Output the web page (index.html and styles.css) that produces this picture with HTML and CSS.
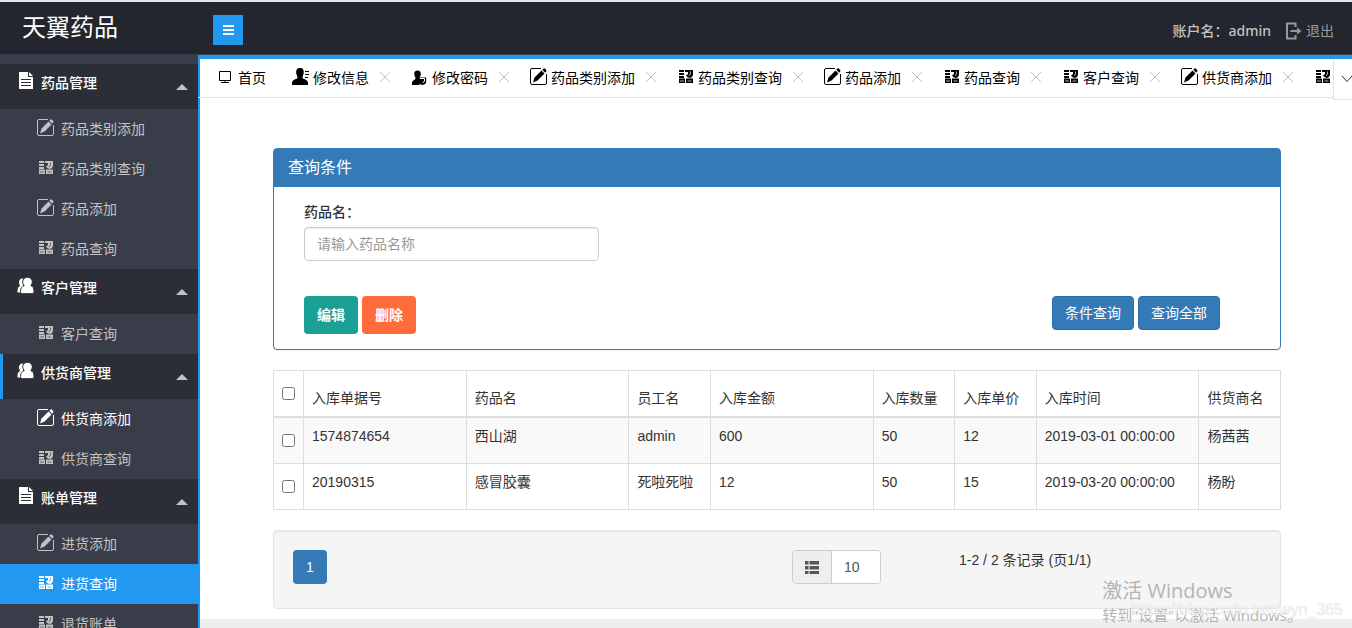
FILE: index.html
```html
<!DOCTYPE html>
<html lang="zh-CN">
<head>
<meta charset="utf-8">
<title>天翼药品</title>
<link rel="stylesheet" href="styles.css">
</head>
<body>
<svg class="sprite" aria-hidden="true">
  <symbol id="doc" viewBox="0 0 17 17"><path d="M2 0h9v5h5v12H2z"/><path d="M12 0l4 4h-4z"/><path class="cut" d="M4 7.500h10M4 10.500h10M4 13.500h10"/></symbol>
  <symbol id="users" viewBox="0 0 17 17"><path d="M5.500 1.500C3 1.500 1.800 3.500 2 6c.2 1.500 1 2.200 1 3C1 10 .5 11.500.5 15.500H6v-14z"/><path class="edge" d="M10.500.3c3 0 4.800 2 4.800 4.500 0 1.600-.8 2.800-1.500 3.800C16 9.500 17 11 17 14.500c0 1.400-.7 2.200-2 2.200H5.500c-1.300 0-2-.8-2-2.200 0-3.500 1.200-5 3.700-5.900-.7-1-1.500-2.200-1.500-3.800C5.700 2.300 7.500.3 10.500.3z"/></symbol>
  <symbol id="edit" viewBox="0 0 17 17"><path class="line" d="M11 .5H2Q.5.5.5 2v13q0 1.500 1.500 1.500h13q1.500 0 1.500-1.500V6"/><path d="M3 14.500l1.500-5L11.500 2.500l3 3-7 7zM12.300 1.800l1.200-1.200q.7-.6 1.300 0l1.400 1.400q.6.600 0 1.300L15.200 4.700z"/></symbol>
  <symbol id="list" viewBox="0 0 17 17"><path d="M2 2h5v2H2zM2 5h5v2H2zM2 8h5v2H2zM2 10.500h6V15H2zM9 10.500h7V15H9z"/><path d="M8 2h8v4q0 3-3 4-3-.5-4-2.500L11 6V4H8z"/><path class="cut thin" d="M3 13h4M10.500 13h4M13.500 3.500V6L12 8"/></symbol>
  <symbol id="monitor" viewBox="0 0 14 14"><path class="line" d="M1.500 1.500h11v9h-11zM7 10.500v2M3 12.500h8"/></symbol>
  <symbol id="person" viewBox="0 0 17 17"><path d="M8 0c3 0 4 2 3.700 5-.2 2-1.200 3-1.200 5 0 1 5.500 1.200 5.500 5v2H0v-2c0-3.800 5.500-4 5.500-5 0-2-1.200-3-1.300-5C4 2 5 0 8 0z"/><path class="line" d="M13 3.500h4M13 6.500h4M13 9.500h3"/></symbol>
  <symbol id="secure" viewBox="0 0 17 17"><path d="M6.500 2.500c2.300 0 3.500 1.500 3.300 3.700-.1 1.700-1.300 2.500-1.300 3.800v7H1v-2c0-3 3.500-3 3.500-4.500 0-1.500-1-2.600-1.200-4.300C3 4 4.200 2.500 6.500 2.500z"/><path d="M7.500 9.500h7.700v4q0 2.500-3.500 3.500-4.200-1-4.200-3.500z"/><path class="cut" d="M9 10.500h4.500v2.500q-.5 1.500-2 1.500"/></symbol>
  <symbol id="exit" viewBox="0 0 17 18"><path class="thick" d="M10.500 5V1.500H2v15h8.500V13M5.500 9h9"/><path d="M12 5.500L16.500 9 12 12.500z"/></symbol>
  <symbol id="close" viewBox="0 0 12 12"><path class="line" d="M1 1l10 10M11 1L1 11"/></symbol>
  <symbol id="chevron" viewBox="0 0 12 8"><path class="line" d="M1 1l5 5.500L11 1"/></symbol>
  <symbol id="rows" viewBox="0 0 14 13"><path d="M0 0h3.500v3.500H0zM4.500 0H14v3.500H4.500zM0 5h3.500v3.500H0zM4.500 5H14v3.500H4.500zM0 10h3.500v3H0zM4.500 10H14v3H4.500z"/></symbol>
</svg>

<header class="top">
  <h1 class="logo">天翼药品</h1>
  <button class="toggle" aria-label="切换菜单"><span class="bars"></span></button>
  <div class="account"><span class="user">账户名：admin</span><a class="logout" href="#"><svg class="ico-exit"><use href="#exit"/></svg>退出</a></div>
</header>

<div class="layout">
  <nav class="side">
    <section>
      <button class="group"><svg class="ico"><use href="#doc"/></svg><span>药品管理</span><i class="caret"></i></button>
      <a class="item" href="#"><svg class="ico"><use href="#edit"/></svg>药品类别添加</a>
      <a class="item" href="#"><svg class="ico"><use href="#list"/></svg>药品类别查询</a>
      <a class="item" href="#"><svg class="ico"><use href="#edit"/></svg>药品添加</a>
      <a class="item" href="#"><svg class="ico"><use href="#list"/></svg>药品查询</a>
    </section>
    <section>
      <button class="group"><svg class="ico"><use href="#users"/></svg><span>客户管理</span><i class="caret"></i></button>
      <a class="item" href="#"><svg class="ico"><use href="#list"/></svg>客户查询</a>
    </section>
    <section>
      <button class="group marked"><svg class="ico"><use href="#users"/></svg><span>供货商管理</span><i class="caret"></i></button>
      <a class="item hover" href="#"><svg class="ico"><use href="#edit"/></svg>供货商添加</a>
      <a class="item" href="#"><svg class="ico"><use href="#list"/></svg>供货商查询</a>
    </section>
    <section>
      <button class="group"><svg class="ico"><use href="#doc"/></svg><span>账单管理</span><i class="caret"></i></button>
      <a class="item" href="#"><svg class="ico"><use href="#edit"/></svg>进货添加</a>
      <a class="item active" href="#"><svg class="ico"><use href="#list"/></svg>进货查询</a>
      <a class="item" href="#"><svg class="ico"><use href="#list"/></svg>退货账单</a>
    </section>
  </nav>

  <div class="main">
    <div class="tabbar">
      <div class="tabs">
        <div class="tab home"><svg class="ico-home"><use href="#monitor"/></svg><a href="#">首页</a></div>
        <div class="tab"><svg class="ico"><use href="#person"/></svg><a href="#">修改信息</a><button class="x" aria-label="关闭"><svg><use href="#close"/></svg></button></div>
        <div class="tab"><svg class="ico"><use href="#secure"/></svg><a href="#">修改密码</a><button class="x" aria-label="关闭"><svg><use href="#close"/></svg></button></div>
        <div class="tab"><svg class="ico"><use href="#edit"/></svg><a href="#">药品类别添加</a><button class="x" aria-label="关闭"><svg><use href="#close"/></svg></button></div>
        <div class="tab"><svg class="ico"><use href="#list"/></svg><a href="#">药品类别查询</a><button class="x" aria-label="关闭"><svg><use href="#close"/></svg></button></div>
        <div class="tab"><svg class="ico"><use href="#edit"/></svg><a href="#">药品添加</a><button class="x" aria-label="关闭"><svg><use href="#close"/></svg></button></div>
        <div class="tab"><svg class="ico"><use href="#list"/></svg><a href="#">药品查询</a><button class="x" aria-label="关闭"><svg><use href="#close"/></svg></button></div>
        <div class="tab"><svg class="ico"><use href="#list"/></svg><a href="#">客户查询</a><button class="x" aria-label="关闭"><svg><use href="#close"/></svg></button></div>
        <div class="tab"><svg class="ico"><use href="#edit"/></svg><a href="#">供货商添加</a><button class="x" aria-label="关闭"><svg><use href="#close"/></svg></button></div>
        <div class="tab"><svg class="ico"><use href="#list"/></svg></div>
      </div>
      <button class="more" aria-label="更多"><svg><use href="#chevron"/></svg></button>
    </div>

    <main class="content">
      <section class="panel">
        <h2 class="panel-head">查询条件</h2>
        <form class="panel-body">
          <label for="drug">药品名：</label>
          <input class="field" id="drug" type="text" placeholder="请输入药品名称">
          <div class="actions">
            <button class="btn green" type="button">编辑</button>
            <button class="btn orange" type="button">删除</button>
            <span class="spring"></span>
            <button class="btn blue" type="button">条件查询</button>
            <button class="btn blue" type="button">查询全部</button>
          </div>
        </form>
      </section>

      <table class="grid">
        <colgroup><col class="c-check"><col class="c-wide"><col class="c-wide"><col class="c-slim"><col class="c-wide"><col class="c-slim"><col class="c-slim"><col class="c-wide"><col class="c-slim"></colgroup>
        <thead>
          <tr><th class="check"><input type="checkbox" aria-label="全选"></th><th>入库单据号</th><th>药品名</th><th>员工名</th><th>入库金额</th><th>入库数量</th><th>入库单价</th><th>入库时间</th><th>供货商名</th></tr>
        </thead>
        <tbody>
          <tr><td class="check"><input type="checkbox" aria-label="选择 1574874654"></td><td>1574874654</td><td>西山湖</td><td>admin</td><td>600</td><td>50</td><td>12</td><td>2019-03-01 00:00:00</td><td>杨茜茜</td></tr>
          <tr><td class="check"><input type="checkbox" aria-label="选择 20190315"></td><td>20190315</td><td>感冒胶囊</td><td>死啦死啦</td><td>12</td><td>50</td><td>15</td><td>2019-03-20 00:00:00</td><td>杨盼</td></tr>
        </tbody>
      </table>

      <div class="pager">
        <div class="pages"><a class="page" href="#">1</a></div>
        <div class="size"><label class="addon" for="size" aria-label="每页条数"><svg><use href="#rows"/></svg></label><input id="size" type="text" value="10"></div>
        <div class="total">1-2 / 2 条记录 (页1/1)</div>
      </div>
    </main>
    <footer class="foot"></footer>
  </div>
</div>

<div class="activate"><p class="big">激活 Windows</p><p class="small">转到"设置"以激活 Windows。</p></div>
<div class="stamp">https://blog.csdn.net/wyn_365</div>
</body>
</html>
```
FILE: styles.css
```css
* { box-sizing: border-box; }
body {
  margin: 0;
  height: 100vh;
  overflow: hidden;
  display: flex;
  flex-direction: column;
  position: relative;
  border-top: 2px solid #e4e4e6;
  background: #fff;
  color: #333;
  font: 14px/20px "Liberation Sans", "Noto Sans CJK SC", sans-serif;
}
a { color: inherit; text-decoration: none; }
button, input { font: inherit; margin: 0; }
button { border: 0; padding: 0; background: none; color: inherit; cursor: pointer; }
svg { display: block; fill: currentColor; flex: none; }
.sprite { position: absolute; width: 0; height: 0; }
.line, .thick { fill: none; stroke: currentColor; }
.thick { stroke-width: 2; }
.cut { fill: none; stroke: var(--bg, #fff); }
.thin { stroke-opacity: .7; }
.edge { stroke: var(--bg, #fff); stroke-width: 1; }
.ico { width: 17px; height: 17px; }

/* header */
.top {
  flex: none;
  display: flex;
  align-items: center;
  height: 53px;
  padding: 0 18px 0 22px;
  background: #23262e;
  border-bottom: 1px solid #393d49;
  color: #c2c2c2;
  font-family: "Noto Sans", "Noto Sans CJK SC", sans-serif;
}
.logo { width: 191px; margin: 0; padding-bottom: 4px; color: #fff; font: 24px/32px "Noto Sans CJK SC", sans-serif; }
.toggle { width: 30px; height: 30px; margin-top: 4px; display: flex; align-items: center; justify-content: center; background: #2299ee; }
.bars { width: 11px; height: 10px; border-top: 2px solid #fff; border-bottom: 2px solid #fff; background: linear-gradient(#fff, #fff) center / 100% 2px no-repeat; }
.account { display: flex; align-items: center; gap: 14px; margin: 6px 0 0 auto; }
.user { font-weight: 500; }
.logout { display: flex; align-items: center; gap: 4px; color: #999; }
.ico-exit { width: 17px; height: 18px; }

/* navigation */
.layout { flex: 1; min-height: 0; display: flex; }
.side { width: 200px; flex: none; overflow: hidden; padding-top: 9px; background: #393d49; border-right: 2px solid #2299ee; font-family: "Noto Sans CJK SC", sans-serif; }
.group { --bg: #2b2e37; display: flex; align-items: flex-start; gap: 7px; width: 100%; height: 45px; padding: 8px 10px 0 17px; background: #2b2e37; color: #fff; font-weight: 500; text-align: left; }
.marked { padding-left: 14px; border-left: 3px solid #2299ee; }
.caret { margin: 12px 0 0 auto; border: 6px solid transparent; border-top: 0; border-bottom-color: #c2c2c2; }
.item { --bg: #393d49; display: flex; align-items: center; gap: 7px; height: 40px; padding: 0 0 2px 37px; color: #c2c2c2; }
.item .ico { margin-bottom: 2px; }
.hover { color: #fff; }
.active { --bg: #2299ee; background: #2299ee; color: #fff; }

/* tabs */
.main { flex: 1; min-width: 0; display: flex; flex-direction: column; }
.tabbar { flex: none; display: flex; height: 43px; margin-left: -2px; border-top: 4px solid #2299ee; border-bottom: 1px solid #e2e2e2; color: #000; font-family: "Noto Sans CJK SC", sans-serif; }
.tabs { flex: 1; min-width: 0; overflow: hidden; display: flex; gap: 20px; padding: 0 0 2px 20px; }
.tab { flex: none; display: flex; align-items: center; gap: 4px; white-space: nowrap; }
.tab .ico { margin-bottom: 1px; }
.home { gap: 6px; margin-right: 6px; }
.ico-home { width: 14px; height: 14px; }
.x { margin-left: 6px; color: #c2c2c2; }
.x svg { width: 12px; height: 12px; }
.more { flex: none; width: 19px; height: 41px; padding-left: 7px; overflow: hidden; background: #fff; border: solid #e2e2e2; border-width: 0 0 1px 1px; color: #333; }
.more svg { width: 12px; height: 8px; }

/* content */
.content { flex: 1; min-height: 0; padding: 50px 71px 0 73px; }
.panel { border: 1px solid #337ab7; border-radius: 4px; box-shadow: 0 1px 1px rgba(0, 0, 0, .05); }
.panel-head { margin: 0; padding: 7px 14px 11px; background: #337ab7; color: #fff; font: 16px/20px "Noto Sans CJK SC", sans-serif; }
.panel-body { padding: 15px 60px 15px 30px; }
.panel-body label { display: block; margin-bottom: 5px; font-weight: 500; }
.field { display: block; width: 295px; height: 34px; padding: 6px 12px; border: 1px solid #ccc; border-radius: 4px; box-shadow: inset 0 1px 1px rgba(0, 0, 0, .075); }
.field::placeholder { color: #999; }
.actions { display: flex; align-items: flex-start; gap: 4px; margin-top: 35px; }
.spring { flex: 1; }
.btn { padding: 0 13px; border-radius: 4px; color: #fff; }
.green, .orange { height: 38px; font-weight: 700; }
.green { background: #1aa094; }
.orange { background: #ff6b3a; }
.blue { height: 34px; border: 1px solid #2e6da4; padding: 0 12px; background: #337ab7; }

.grid { width: 100%; margin-top: 20px; table-layout: fixed; border-collapse: collapse; }
.c-check { width: 30px; }
.c-slim { width: 8.1%; }
.grid th, .grid td { border: 1px solid #ddd; height: 46px; padding: 8px; font-weight: 400; text-align: left; vertical-align: top; white-space: nowrap; }
.grid th { border-bottom-width: 2px; vertical-align: bottom; }
.grid tbody tr:first-child { height: 47px; background: #f9f9f9; }
.grid .check { text-align: center; vertical-align: middle; padding: 0; line-height: 13px; }
.check input { margin: 0; width: 13px; height: 13px; vertical-align: middle; }

.pager { display: grid; grid-template-columns: 499px 167px 1fr; align-items: start; min-height: 79px; margin-top: 20px; padding: 19px; background: #f5f5f5; border: 1px solid #e3e3e3; border-radius: 4px; box-shadow: inset 0 1px 1px rgba(0, 0, 0, .05); }
.page { display: inline-block; padding: 7px 13px; border-radius: 4px; background: #337ab7; color: #fff; }
.size { display: flex; width: 89px; height: 34px; border: 1px solid #ccc; border-radius: 4px; background: #fff; overflow: hidden; }
.addon { width: 39px; display: flex; flex: none; align-items: center; justify-content: center; background: #eee; border-right: 1px solid #ccc; color: #555; }
.addon svg { width: 14px; height: 13px; }
.size input { min-width: 0; flex: 1; border: 0; padding: 0 12px; color: #555; }
.foot { flex: none; height: 9px; background: #eee; }

/* overlays above the page */
.activate { position: absolute; right: 50px; bottom: 3px; color: #b4b4b4; font-family: "Open Sans", "Noto Sans CJK SC", sans-serif; white-space: nowrap; pointer-events: none; }
.activate p { margin: 0; }
.big { font-size: 20px; line-height: 28px; }
.small { font-size: 15px; line-height: 20px; }
.stamp { position: absolute; right: 9px; bottom: 8px; color: rgba(255, 255, 255, .7); text-shadow: 0 0 1px #ccc; font: 16px/20px "Liberation Sans", sans-serif; pointer-events: none; }
```
